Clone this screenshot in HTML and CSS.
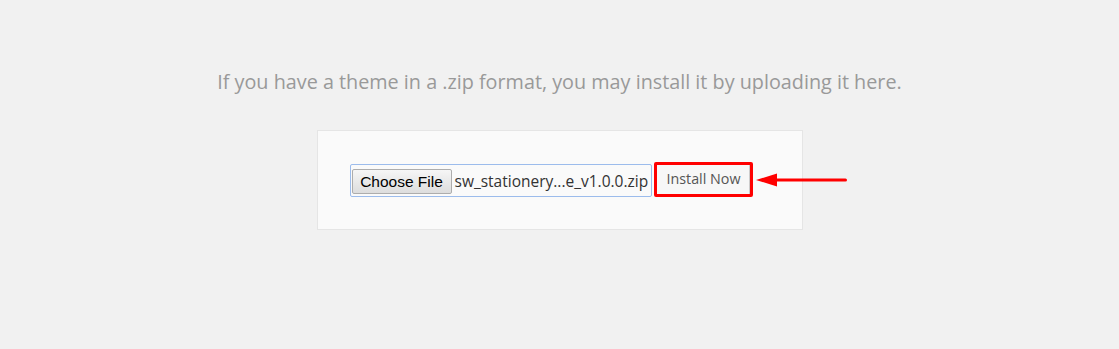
FILE: index.html
```html
<!DOCTYPE html>
<html lang="en">
<head>
    <meta charset="UTF-8">
    <title>Upload Theme</title>
    <link rel="stylesheet" href="styles.css">
</head>
<body>
    <div class="upload-theme">
        <p class="install-help">If you have a theme in a .zip format, you may install it by uploading it here.</p>
        <form class="upload-form">
            <div class="file-field">
                <span class="choose-btn">Choose File</span>
                <span class="file-name">sw_stationery...e_v1.0.0.zip</span>
            </div>
            <div class="marked">
                <span class="install-btn">Install Now</span>
            </div>
            <svg class="arrow" width="92" height="14" viewBox="0 0 92 14">
                <polygon points="0,7 21,0.5 21,13.5" fill="#f00"/>
                <rect x="18" y="5.5" width="73" height="3" rx="1.5" fill="#f00"/>
            </svg>
        </form>
    </div>
</body>
</html>
```

FILE: styles.css
```css
body,p,form {margin:0;padding:0;}
body {background:#f1f1f1;font-family:"Open Sans","Liberation Sans",sans-serif;}

.upload-theme {padding-top:69px;}
.install-help {text-align:center;font-size:19.8px;line-height:26px;color:#999;}

.upload-form {box-sizing:border-box;width:486px;height:100px;margin:35px auto 0;padding-left:32px;background:#fafafa;border:1px solid #e5e5e5;display:flex;align-items:center;}
.upload-form > * {flex:none;}

.file-field {box-sizing:border-box;width:302px;height:33px;margin-top:1px;border:1px solid #9cbcec;border-radius:2px;display:flex;align-items:center;padding-left:1px;overflow:hidden;}
.choose-btn {flex:none;box-sizing:border-box;width:100px;height:25px;margin-top:2px;border:1px solid #adadad;border-radius:2px;background:linear-gradient(#f6f6f6,#dddddd);font:15.5px/23px "Liberation Sans",Arial,sans-serif;color:#000;text-align:center;}
.file-name {margin-left:3px;font-size:15.5px;color:#333;white-space:nowrap;}

.marked {box-sizing:border-box;height:35px;margin-left:2px;margin-top:-2px;border:3px solid #f00;border-radius:2px;}
.install-btn {display:block;box-sizing:border-box;width:93px;height:29px;padding-left:10px;border-right:1px solid #ccc;background:#f7f7f7;font-size:14.3px;line-height:27px;color:#555;}

.arrow {margin-left:3px;}
```
